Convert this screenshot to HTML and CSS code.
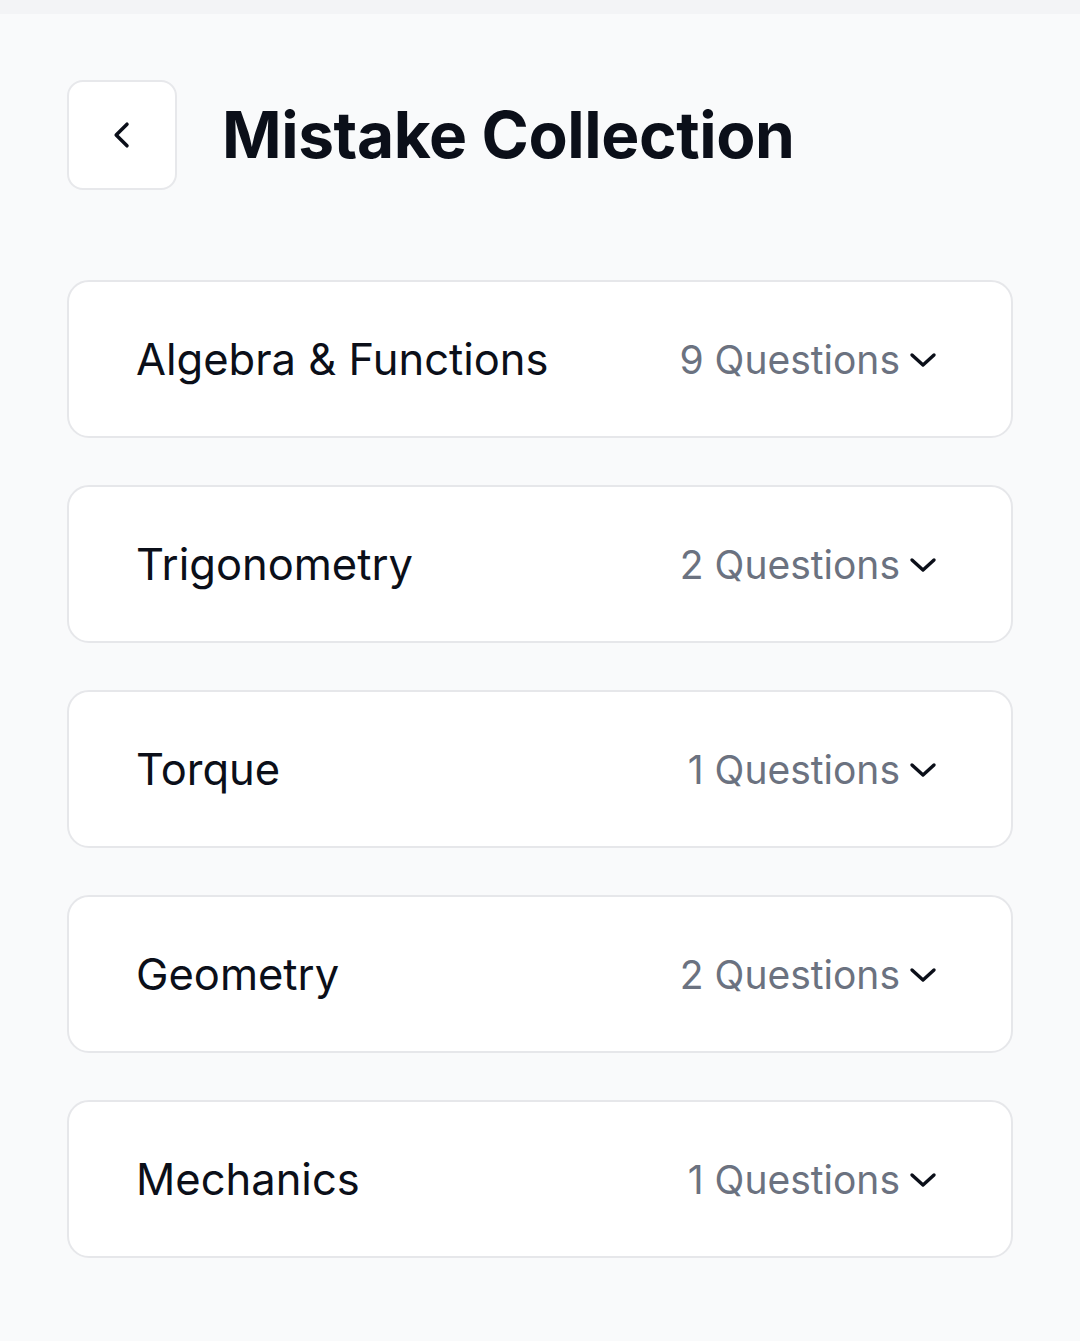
FILE: index.html
```html
<!DOCTYPE html>
<html lang="en">
<head>
<meta charset="utf-8">
<title>Mistake Collection</title>
<link rel="stylesheet" href="styles.css">
</head>
<body>
<div class="topbar"></div>
<main class="page">
  <header class="header">
    <button class="back" aria-label="Back">
      <svg width="40" height="40" viewBox="0 0 24 24" fill="none" stroke="currentColor" stroke-width="2.1" stroke-linecap="round" stroke-linejoin="round"><path d="M15 5.5 8.5 12 15 18.5"/></svg>
    </button>
    <h1 class="title">Mistake Collection</h1>
  </header>
  <ul class="list">
    <li class="card"><span class="name">Algebra &amp; Functions</span><span class="meta"><span class="count">9 Questions</span><svg class="chev" width="28" height="16" viewBox="0 0 28 16" fill="none" stroke="currentColor" stroke-width="3.4" stroke-linecap="round" stroke-linejoin="round"><path d="M3 3l11 10 11-10"/></svg></span></li>
    <li class="card"><span class="name">Trigonometry</span><span class="meta"><span class="count">2 Questions</span><svg class="chev" width="28" height="16" viewBox="0 0 28 16" fill="none" stroke="currentColor" stroke-width="3.4" stroke-linecap="round" stroke-linejoin="round"><path d="M3 3l11 10 11-10"/></svg></span></li>
    <li class="card"><span class="name">Torque</span><span class="meta"><span class="count">1 Questions</span><svg class="chev" width="28" height="16" viewBox="0 0 28 16" fill="none" stroke="currentColor" stroke-width="3.4" stroke-linecap="round" stroke-linejoin="round"><path d="M3 3l11 10 11-10"/></svg></span></li>
    <li class="card"><span class="name">Geometry</span><span class="meta"><span class="count">2 Questions</span><svg class="chev" width="28" height="16" viewBox="0 0 28 16" fill="none" stroke="currentColor" stroke-width="3.4" stroke-linecap="round" stroke-linejoin="round"><path d="M3 3l11 10 11-10"/></svg></span></li>
    <li class="card"><span class="name">Mechanics</span><span class="meta"><span class="count">1 Questions</span><svg class="chev" width="28" height="16" viewBox="0 0 28 16" fill="none" stroke="currentColor" stroke-width="3.4" stroke-linecap="round" stroke-linejoin="round"><path d="M3 3l11 10 11-10"/></svg></span></li>
  </ul>
</main>
</body>
</html>
```
FILE: styles.css
```css
* { box-sizing: border-box; }
html, body { margin: 0; padding: 0; }
body {
  background: #f9fafb;
  font-family: Inter, "Noto Sans", "Liberation Sans", sans-serif;
  color: #0b0f19;
  width: 1080px;
  min-height: 1341px;
}
.topbar {
  height: 14px;
  background: #f3f4f6;
}
.page {
  padding: 66px 67px 0 67px;
}
.header {
  display: flex;
  align-items: center;
  gap: 45px;
  height: 110px;
}
.back {
  width: 110px;
  height: 110px;
  background: #ffffff;
  border: 2px solid #e7e8eb;
  border-radius: 16px;
  display: flex;
  align-items: center;
  justify-content: center;
  color: #0b0f19;
  padding: 0;
}
.title {
  margin: 0;
  font-size: 64px;
  font-weight: 700;
  letter-spacing: -0.4px;
  color: #0b0f19;
  line-height: 1;
}
.list {
  list-style: none;
  margin: 90px 0 0 0;
  padding: 0;
  display: flex;
  flex-direction: column;
  gap: 47px;
  width: 946px;
}
.card {
  height: 158px;
  background: #ffffff;
  border: 2px solid #e6e7ea;
  border-radius: 22px;
  display: flex;
  align-items: center;
  justify-content: space-between;
  padding: 0 74px 0 67px;
}
.name {
  font-size: 43.5px;
  font-weight: 420;
  color: #0b0f19;
}
.meta {
  display: flex;
  align-items: center;
  gap: 9px;
}
.count {
  font-size: 39px;
  font-weight: 400;
  color: #6b7280;
}
.chev {
  color: #0b0f19;
  margin-top: 2px;
}
```
